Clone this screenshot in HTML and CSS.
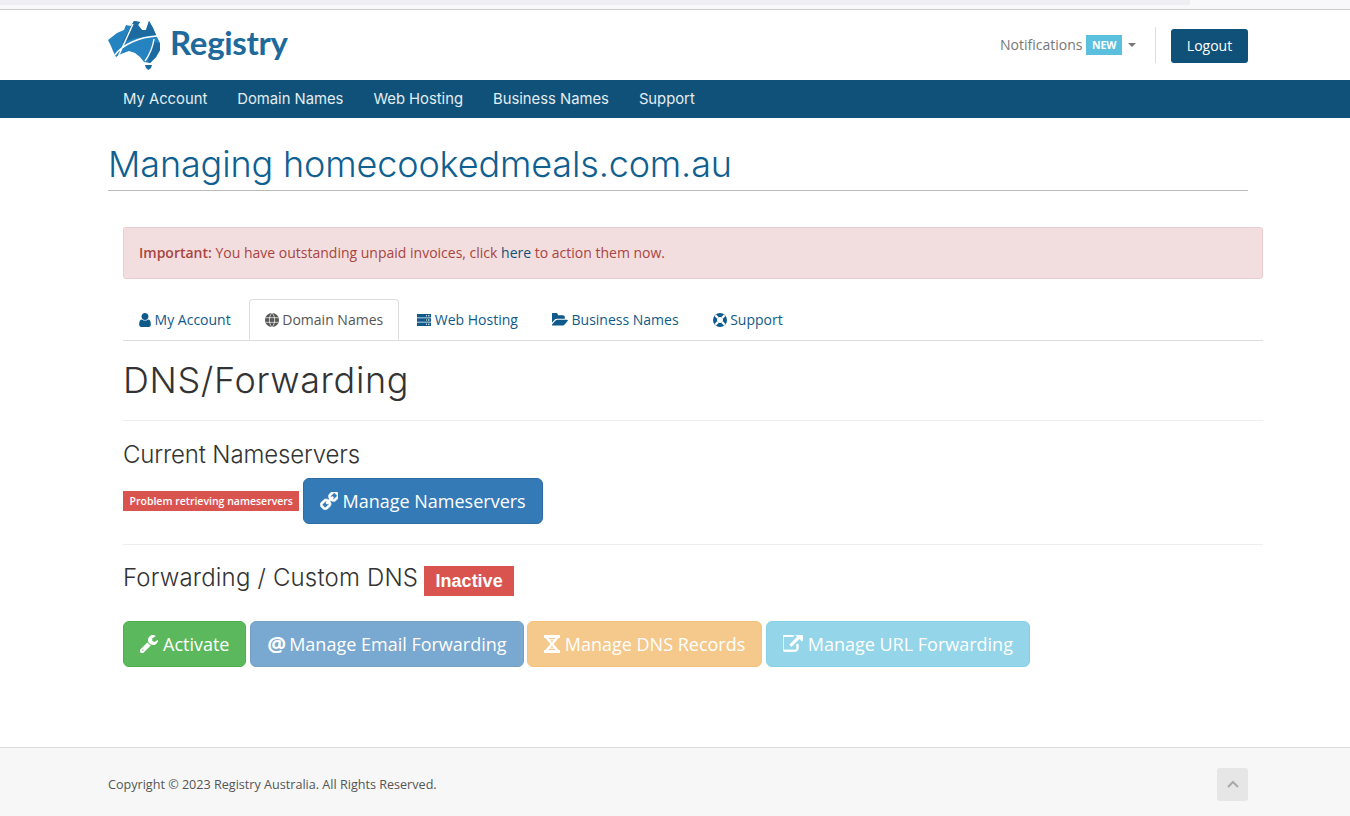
FILE: index.html
```html
<!DOCTYPE html>
<html lang="en">

<head>
  <meta charset="UTF-8">
  <meta name="viewport" content="width=device-width, initial-scale=1.0">
  <title>Registry - DNS/Forwarding</title>
  <link rel="stylesheet" href="styles.css">
</head>

<body>
  <div class="browser-strip"><div class="browser-tab"></div></div>

  <header class="top-bar">
    <a class="logo" href="#">
      <svg class="logo-map" viewBox="0 0 54 52" width="54" height="52">
        <path fill="#2583bf" d="M1 22 L10 15 L17 12 L19 7 L24 8 L27 3 L33 4 L31 7 L35 12 L39 12 L42 3 L46 10 L49 17 L53 25 L53 32 L49 39 L43 45 L37 44 L33 39 L28 35 L22 33 L14 36 L9 39 L6 33 L4 28 Z"/>
        <path fill="#1c6a9f" d="M15 25 L24 8 L27 3 L33 4 L31 7 L35 12 L39 12 L42 3 L46 10 L49 17 C38 18 25 20 15 25 Z"/>
        <path fill="#1c6a9f" d="M41 44 L46 24 L53 25 L53 32 L49 39 L43 45 Z"/>
        <path fill="none" stroke="#fff" stroke-width="1.4" d="M8 37 C16 26 33 19 50 18 M11 39 L26 6 M38 43 C43 36 46 28 47 21"/>
        <path fill="#1c6a9f" d="M38 47 L45 47 L44 50 L41.500 52 L39 50 Z"/>
      </svg>
      <span class="logo-text">Registry</span>
    </a>
    <div class="top-actions">
      <a class="notifications" href="#">Notifications <span class="new-label">NEW</span><span class="caret"></span></a>
      <a class="logout" href="#">Logout</a>
    </div>
  </header>

  <nav class="main-nav">
    <a href="#">My Account</a>
    <a href="#">Domain Names</a>
    <a href="#">Web Hosting</a>
    <a href="#">Business Names</a>
    <a href="#">Support</a>
  </nav>

  <div class="page-title">
    <h1>Managing homecookedmeals.com.au</h1>
  </div>

  <main class="content">
    <div class="alert"><strong>Important:</strong> You have outstanding unpaid invoices, click <a href="#">here</a> to action them now.</div>

    <ul class="tabs">
      <li><a href="#">
        <svg class="icon icon-user" viewBox="256 128 1280 1536"><path d="M1536 1399q0 109-62.500 187t-150.500 78h-854q-88 0-150.500-78t-62.500-187q0-85 8.500-160.500t31.500-152 58.500-131 94-89 134.500-34.500q131 128 313 128t313-128q76 0 134.500 34.500t94 89 58.500 131 31.500 152 8.500 160.500zm-256-887q0 159-112.500 271.500t-271.500 112.500-271.500-112.500-112.500-271.500 112.500-271.500 271.500-112.500 271.500 112.500 112.500 271.500z"/></svg>
        My Account</a></li>
      <li class="active"><a href="#">
        <svg class="icon" viewBox="0 0 14 14"><circle cx="7" cy="7" r="7"/><path fill="none" stroke="#fff" stroke-width=".7" d="M7 0 C3.500 3 3.500 11 7 14 C10.500 11 10.500 3 7 0 M.8 4.700 H13.200 M.8 9.300 H13.200"/></svg>
        Domain Names</a></li>
      <li><a href="#">
        <svg class="icon icon-server" viewBox="0 0 14 12"><path d="M0 0H14V3.400H0ZM0 4.300H14V7.700H0ZM0 8.600H14V12H0Z"/><path fill="#fff" d="M9 1.200h1v1H9ZM11 1.200h1.500v1H11ZM9 5.500h1v1H9ZM11 5.500h1.500v1H11ZM9 9.800h1v1H9ZM11 9.800h1.500v1H11Z"/></svg>
        Web Hosting</a></li>
      <li><a href="#">
        <svg class="icon icon-folder" viewBox="0 128 1792 1536"><path d="M1781 931q0 31-31 66l-336 396q-43 51-120.500 86.500t-143.500 35.500h-1088q-34 0-60.500-13t-26.500-43q0-31 31-66l336-396q43-51 120.500-86.500t143.500-35.500h1088q34 0 60.500 13t26.500 43zm-343-344v160h-832q-94 0-197 47.500t-164 119.500l-337 396-5 6q0-4-.5-12.500t-.5-12.500v-960q0-92 66-158t158-66h320q92 0 158 66t66 158v32h544q92 0 158 66t66 158z"/></svg>
        Business Names</a></li>
      <li><a href="#">
        <svg class="icon" viewBox="0 0 14 14"><circle cx="7" cy="7" r="7"/><circle cx="7" cy="7" r="3" fill="#fff"/><path fill="none" stroke="#fff" stroke-width="2.200" d="M2.300 2.300 L4.900 4.900 M11.700 2.300 L9.100 4.900 M2.300 11.700 L4.900 9.100 M11.700 11.700 L9.100 9.100"/></svg>
        Support</a></li>
    </ul>

    <h2 class="section-title">DNS/Forwarding</h2>
    <hr>

    <h3 class="sub-title sub-title-current">Current Nameservers</h3>
    <div class="nameserver-row">
      <span class="label label-small">Problem retrieving nameservers</span>
      <a class="btn btn-blue" href="#">
        <svg class="btn-icon btn-icon-link" viewBox="128 128 1536 1536"><path stroke="#fff" stroke-width="50" transform="matrix(-1 0 0 1 1792 0)" d="M1456 1216q0-40-28-68l-208-208q-28-28-68-28-42 0-72 32 3 3 19 18.500t21.500 21.500 15 19 13 25.500 3.500 27.500q0 40-28 68t-68 28q-15 0-27.500-3.500t-25.500-13-19-15-21.500-21.500-18.500-19q-33 31-33 73 0 40 28 68l206 207q27 27 68 27 40 0 68-26l147-146q28-28 28-67zm-703-705q0-40-28-68l-206-207q-28-28-68-28-39 0-68 27l-147 146q-28 28-28 67 0 40 28 68l208 208q27 27 68 27 42 0 72-31-3-3-19-18.500t-21.500-21.500-15-19-13-25.500-3.500-27.500q0-40 28-68t68-28q15 0 27.500 3.500t25.500 13 19 15 21.500 21.500 18.500 19q33-31 33-73zm895 705q0 120-85 203l-147 146q-83 83-203 83-121 0-204-85l-206-207q-83-83-83-203 0-123 88-209l-88-88q-86 88-208 88-120 0-204-84l-208-208q-84-84-84-204t85-203l147-146q83-83 203-83 121 0 204 85l206 207q83 83 83 203 0 123-88 209l88 88q86-88 208-88 120 0 204 84l208 208q84 84 84 204z"/></svg>
        Manage Nameservers</a>
    </div>
    <hr class="rule-mid">

    <h3 class="sub-title sub-title-forward">Forwarding / Custom DNS <span class="label label-big">Inactive</span></h3>
    <div class="button-row">
      <a class="btn btn-green" href="#">
        <svg class="btn-icon" viewBox="128 128 1600 1600"><path d="M448 1472q0-26-19-45t-45-19-45 19-19 45 19 45 45 19 45-19 19-45zm644-420l-682 682q-37 37-90 37-52 0-91-37l-106-108q-38-36-38-90 0-53 38-91l681-681q39 98 114.500 173.500t173.500 114.500zm634-435q0 39-23 106-47 134-164.500 217.500t-258.500 83.500q-185 0-316.500-131.500t-131.500-316.500 131.500-316.500 316.500-131.500q58 0 121.500 16.500t107.500 46.500q16 11 16 28t-16 28l-293 169v224l193 107q5-3 79-48.500t135.500-81 70.500-35.500q15 0 23.500 10t8.500 25z"/></svg>
        Activate</a>
      <a class="btn btn-blue btn-faded" href="#"><span class="at-glyph">@</span> Manage Email Forwarding</a>
      <a class="btn btn-orange btn-faded" href="#">
        <svg class="btn-icon btn-icon-dna" viewBox="0 0 16 18">
          <path d="M0 0H16V3H0ZM0 15H16V18H0Z"/>
          <path fill="none" stroke="#fff" stroke-width="2.400" d="M2 2 L14 16 M14 2 L2 16"/>
          <path fill="none" stroke="#fff" stroke-width="1" d="M4 4.800H12M4 13.200H12"/>
        </svg>
        Manage DNS Records</a>
      <a class="btn btn-cyan btn-faded" href="#">
        <svg class="btn-icon btn-icon-ext" viewBox="128 128 1664 1536"><path stroke="#fff" stroke-width="70" d="M1408 928v320q0 119-84.500 203.500t-203.500 84.500h-832q-119 0-203.500-84.500t-84.500-203.500v-832q0-119 84.500-203.500t203.500-84.500h704q14 0 23 9t9 23v64q0 14-9 23t-23 9h-704q-66 0-113 47t-47 113v832q0 66 47 113t113 47h832q66 0 113-47t47-113v-320q0-14 9-23t23-9h64q14 0 23 9t9 23zm384-864v512q0 26-19 45t-45 19-45-19l-176-176-652 652q-10 10-23 10t-23-10l-114-114q-10-10-10-23t10-23l652-652-176-176q-19-19-19-45t19-45 45-19h512q26 0 45 19t19 45z"/></svg>
        Manage URL Forwarding</a>
    </div>
  </main>

  <footer class="page-footer">
    <p>Copyright © 2023 Registry Australia. All Rights Reserved.</p>
    <a class="to-top" href="#">
      <svg viewBox="0 0 12 8" width="12" height="8"><path fill="none" stroke="#a9a9a9" stroke-width="2" d="M1 7 L6 2 L11 7"/></svg>
    </a>
  </footer>
</body>

</html>
```

FILE: styles.css
```css
body {
  margin: 0;
  background-color: #fff;
  font-family: 'Open Sans', sans-serif;
  font-size: 14px;
  line-height: 20px;
  color: #333;
}

a {
  text-decoration: none;
}

.browser-strip {
  height: 9px;
  background-color: #f8f8fb;
  border-bottom: 1px solid #ccc;
}

.browser-tab {
  width: 1190px;
  height: 5px;
  background-color: #eeeef3;
}

.top-bar {
  height: 70px;
  padding: 0 102px 0 108px;
  display: flex;
  align-items: center;
  justify-content: space-between;
}

.logo {
  display: flex;
  align-items: center;
  gap: 9px;
  margin-bottom: 2px;
  margin-left: -1px;
}

.logo-text {
  font-family: Lato, sans-serif;
  font-size: 33px;
  font-weight: 700;
  letter-spacing: -0.3px;
  color: #20699b;
  margin-bottom: 4px;
}

.top-actions {
  display: flex;
  align-items: center;
  height: 36px;
}

.notifications {
  color: #777;
  padding-right: 19px;
  margin-right: 15px;
  height: 36px;
  display: flex;
  align-items: center;
  gap: 4px;
  border-right: 1px solid #ddd;
}

.new-label {
  background-color: #5bc0de;
  color: #fff;
  font-size: 10.500px;
  font-weight: 700;
  line-height: 20px;
  padding: 0 5.500px;
}

.caret {
  width: 0;
  height: 0;
  margin-left: 2px;
  border-top: 4px solid #777;
  border-left: 4px solid transparent;
  border-right: 4px solid transparent;
}

.logout {
  background-color: #0f5179;
  color: #fff;
  border-radius: 3px;
  width: 77px;
  height: 34px;
  line-height: 34px;
  text-align: center;
  margin-top: 2px;
}

.main-nav {
  height: 38px;
  background-color: #0f5179;
  padding-left: 108px;
  display: flex;
  align-items: center;
}

.main-nav a {
  font-family: Inter, sans-serif;
  font-size: 14.800px;
  color: #e4edf3;
  padding: 0 15px;
}

.page-title {
  margin: 0 102px 0 108px;
  height: 72px;
  border-bottom: 1px solid #bbb;
}

.page-title h1 {
  margin: 0;
  padding-top: 26px;
  font-family: Inter, sans-serif;
  font-size: 36px;
  line-height: 40px;
  font-weight: 300;
  letter-spacing: -0.14px;
  color: #0f5f91;
}

.content {
  margin: 36px 87px 0 123px;
  height: 520px;
}

.alert {
  height: 50px;
  line-height: 50px;
  padding-left: 15px;
  background-color: #f2dede;
  border: 1px solid #ebccd1;
  border-radius: 3px;
  color: #a94442;
}

.alert strong {
  font-weight: 600;
}

.alert a {
  color: #0f5179;
}

.tabs {
  list-style: none;
  margin: 20px 0 0;
  padding: 0;
  height: 41px;
  display: flex;
  gap: 2px;
  border-bottom: 1px solid #ddd;
}

.tabs a {
  display: flex;
  align-items: center;
  gap: 3.600px;
  box-sizing: border-box;
  height: 41px;
  padding: 0 15px;
  color: #0f5a8a;
  fill: #0f5a8a;
  border: 1px solid transparent;
}

.tabs .active a {
  color: #555;
  fill: #555;
  background-color: #fff;
  border-color: #ddd #ddd #fff;
  border-radius: 4px 4px 0 0;
}

.icon {
  width: 14px;
  height: 14px;
}

.icon-user {
  width: 12px;
}

.icon-server {
  height: 12px;
}

.icon-folder {
  width: 16px;
}

.section-title {
  margin: 19px 0 20px;
  font-family: Inter, sans-serif;
  font-size: 36px;
  line-height: 40px;
  font-weight: 300;
  letter-spacing: 0.63px;
}

hr {
  border: 0;
  border-top: 1px solid #eee;
  margin: 0;
}

.sub-title {
  font-family: Inter, sans-serif;
  font-size: 24px;
  line-height: 26px;
  font-weight: 300;
}

.sub-title-current {
  margin: 21px 0 10px;
  letter-spacing: -0.16px;
}

.sub-title-forward {
  display: flex;
  align-items: flex-start;
  gap: 6px;
  margin: 21px 0 25px;
  line-height: 24px;
  letter-spacing: 0.17px;
}

.nameserver-row {
  display: flex;
  align-items: center;
  gap: 4px;
}

.label {
  background-color: #d9534f;
  color: #fff;
  font-weight: 600;
}

.label-small {
  font-size: 10.500px;
  line-height: 20px;
  padding: 0 6.500px;
}

.label-big {
  font-family: 'Liberation Sans', sans-serif;
  font-size: 18px;
  font-weight: 700;
  line-height: 30px;
  letter-spacing: 0;
  padding: 0 11.500px;
}

.rule-mid {
  margin-top: 20px;
}

.btn {
  display: inline-flex;
  align-items: center;
  gap: 5px;
  box-sizing: border-box;
  height: 46px;
  padding: 0 16px;
  font-size: 18px;
  color: #fff;
  fill: #fff;
  border: 1px solid transparent;
  border-radius: 6px;
}

.btn-icon {
  width: 18px;
  height: 18px;
}

.btn-icon-link {
  margin-right: -1px;
}

.btn-icon-dna {
  width: 16px;
  height: 18px;
  margin-right: -0.500px;
}

.btn-icon-ext {
  width: 20px;
  height: 18px;
  margin-right: -0.300px;
}

.btn-blue {
  background-color: #337ab7;
  border-color: #2e6da4;
}

.btn-green {
  background-color: #5cb85c;
  border-color: #4cae4c;
}

.btn-orange {
  background-color: #f0ad4e;
  border-color: #eea236;
}

.btn-cyan {
  background-color: #5bc0de;
  border-color: #46b8da;
}

.btn-faded {
  opacity: 0.65;
}

.button-row {
  display: flex;
  gap: 3.700px;
}

.at-glyph {
  width: 17px;
  text-align: center;
  font-weight: 700;
  font-size: 21px;
}

.page-footer {
  height: 68px;
  padding: 0 102px 0 108px;
  background-color: #f7f7f7;
  border-top: 1px solid #ddd;
  display: flex;
  align-items: center;
  justify-content: space-between;
}

.page-footer p {
  margin: 5px 0 0;
  font-size: 12.600px;
  color: #555;
}

.to-top {
  width: 31px;
  height: 33px;
  margin-top: 4px;
  background-color: #e6e6e6;
  border-radius: 3px;
  display: flex;
  align-items: center;
  justify-content: center;
}
```
